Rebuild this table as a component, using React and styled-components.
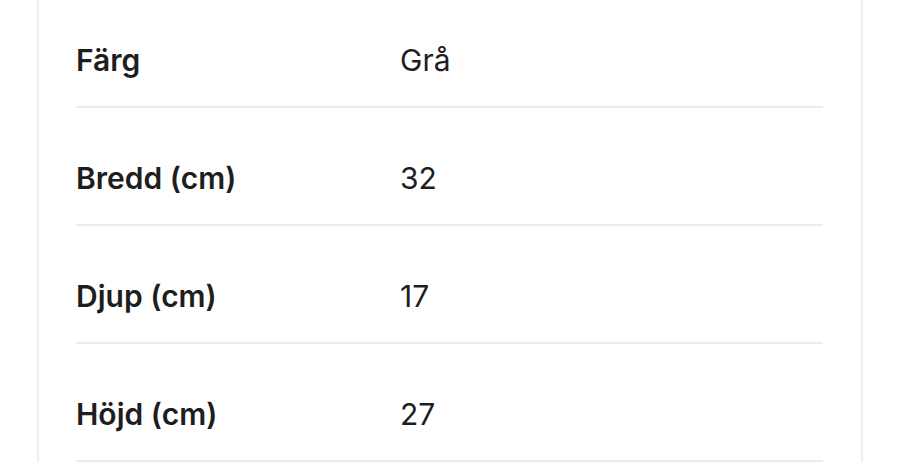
import React from "react";
import styled, { createGlobalStyle } from "styled-components";

const Global = createGlobalStyle`
  html, body { margin: 0; padding: 0; background: #ffffff; }
  body { font-family: Inter, "Liberation Sans", Arial, sans-serif; color: #1f1f1f; overflow: hidden; }
`;

const Page = styled.div`
  width: 900px;
  height: 466px;
  overflow: hidden;
  background: #ffffff;
`;

const Card = styled.section`
  margin: -10px 0 0 37px;
  width: 826px;
  box-sizing: border-box;
  border-left: 2px solid #efefef;
  border-right: 2px solid #efefef;
  padding: 0 38px 0 37px;
`;

const Row = styled.div`
  display: grid;
  grid-template-columns: 324px 1fr;
  align-items: center;
  padding: 54px 0 30px;
  border-bottom: 2px solid #ebebeb;
  font-size: 30px;
  line-height: 32px;
`;

const Label = styled.span`
  font-weight: 600;
  color: #1e1e1e;
`;

const Value = styled.span`
  font-weight: 400;
  color: #1e1e1e;
`;

const specs = [
  ["Färg", "Grå"],
  ["Bredd (cm)", "32"],
  ["Djup (cm)", "17"],
  ["Höjd (cm)", "27"],
];

export default function App() {
  return (
    <Page>
      <Global />
      <Card>
        {specs.map(([k, v]) => (
          <Row key={k}>
            <Label>{k}</Label>
            <Value>{v}</Value>
          </Row>
        ))}
      </Card>
    </Page>
  );
}
